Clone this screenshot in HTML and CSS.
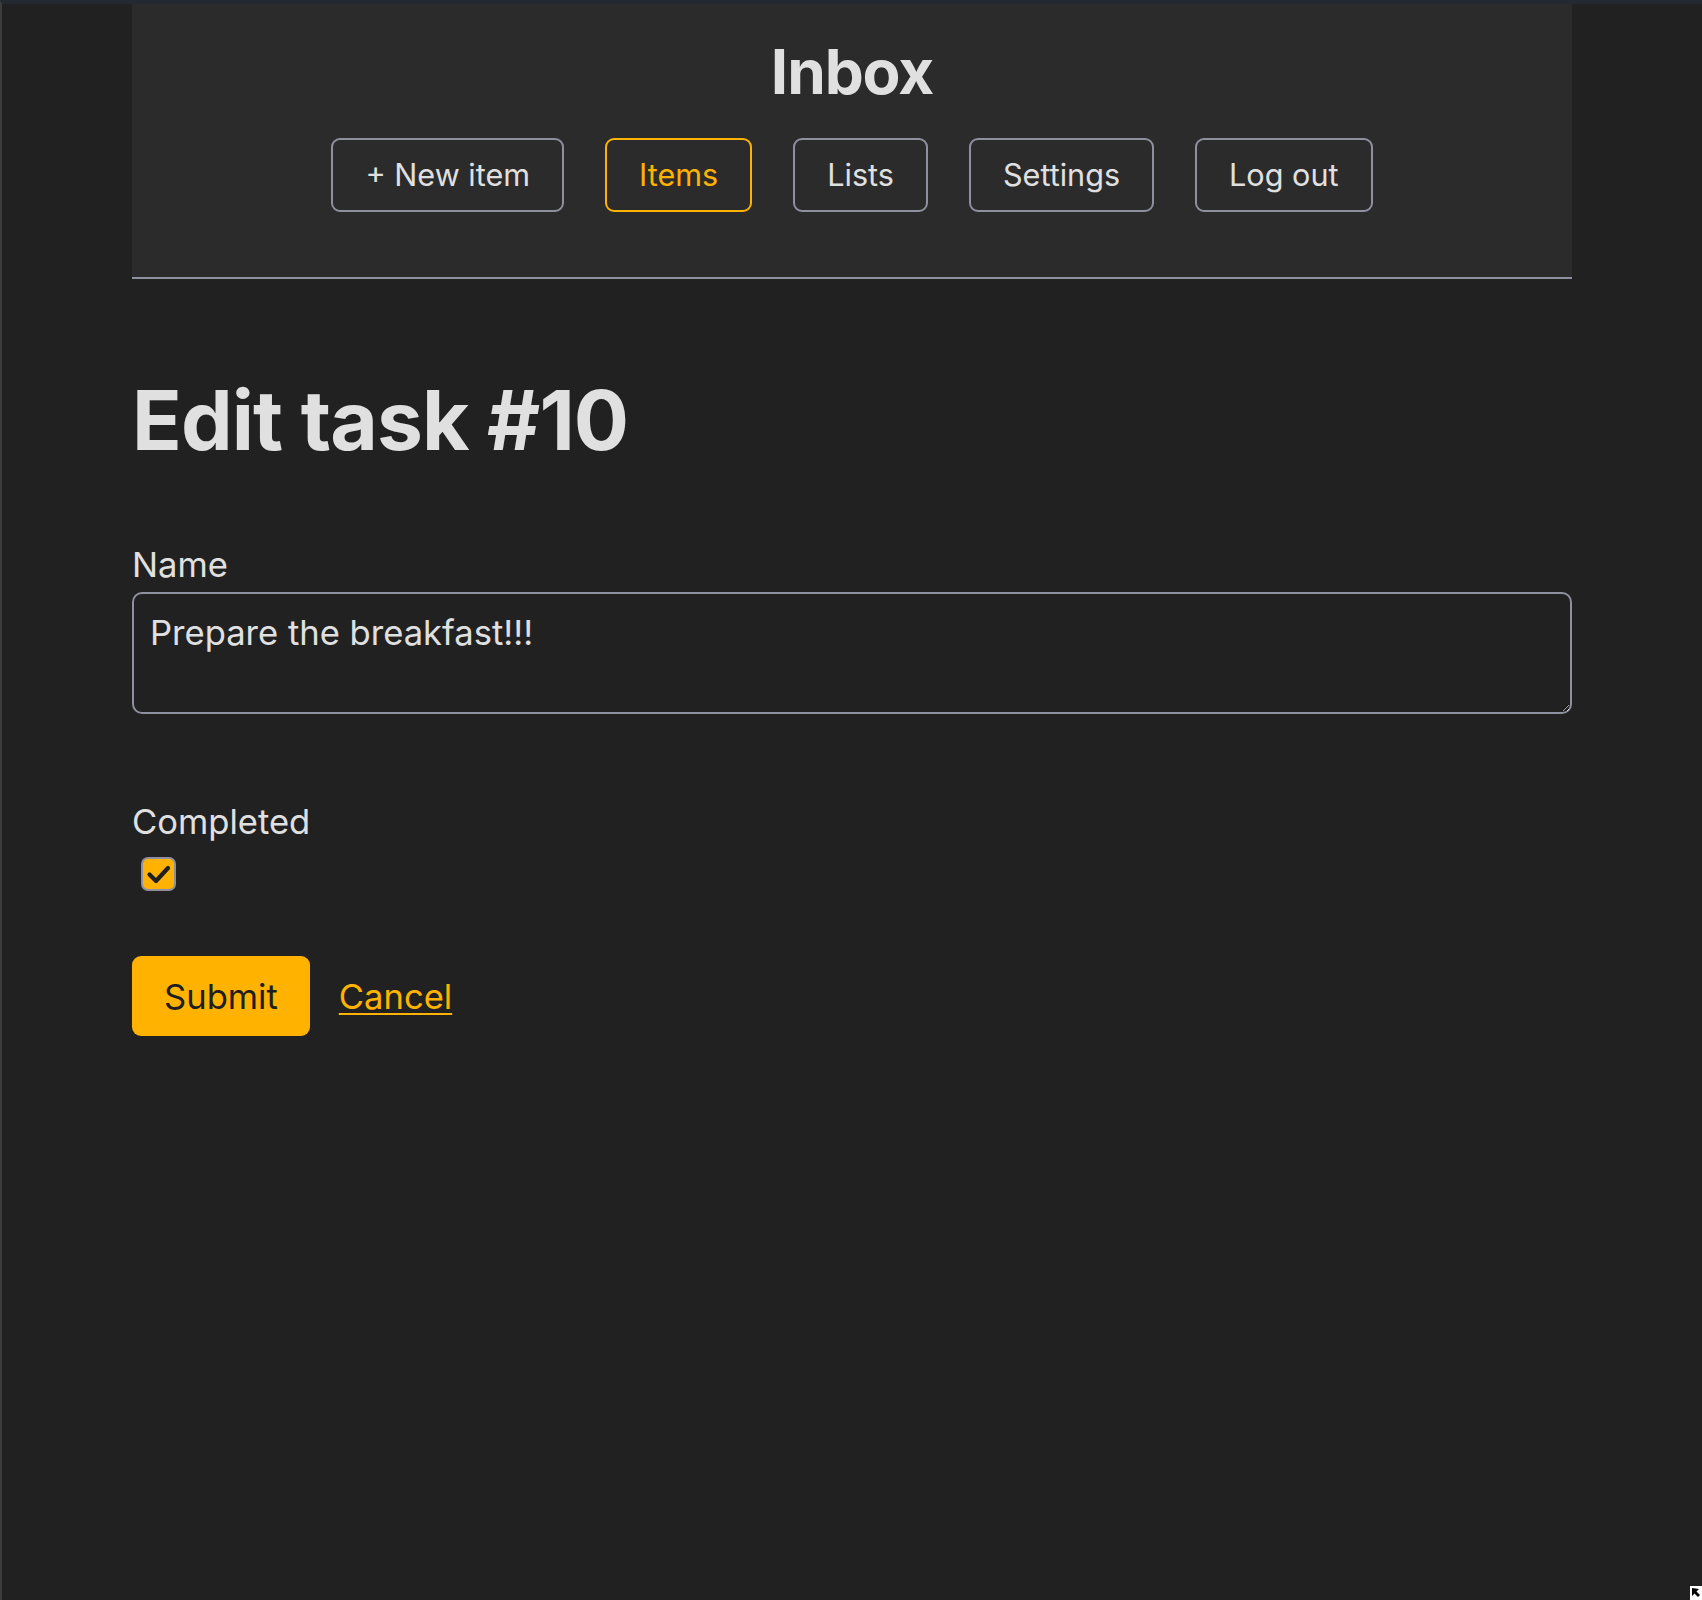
FILE: index.html
```html
<!DOCTYPE html>
<html lang="en">
<head>
<meta charset="utf-8">
<title>Edit task #10</title>
<link rel="stylesheet" href="styles.css">
</head>
<body>
<div class="frame">
  <div class="container">
    <header class="site-header">
      <h1 class="brand">Inbox</h1>
      <nav class="nav">
        <a class="nav-btn" href="#">+ New item</a>
        <a class="nav-btn active" href="#">Items</a>
        <a class="nav-btn" href="#">Lists</a>
        <a class="nav-btn" href="#">Settings</a>
        <a class="nav-btn" href="#">Log out</a>
      </nav>
    </header>
    <main class="content">
      <h1 class="page-title">Edit task #10</h1>
      <form class="form">
        <label class="field-label" for="name">Name</label>
        <textarea id="name" class="field-text">Prepare the breakfast!!!</textarea>
        <label class="field-label completed-label">Completed</label>
        <span class="check" role="checkbox" aria-checked="true">
          <svg width="34" height="34" viewBox="0 0 34 34"><path d="M8.5 17.5 L15 24 L27 11" fill="none" stroke="#1f1f1f" stroke-width="4.2" stroke-linecap="round" stroke-linejoin="round"/></svg>
        </span>
        <div class="actions">
          <button type="button" class="submit">Submit</button>
          <a class="cancel" href="#">Cancel</a>
        </div>
      </form>
    </main>
  </div>
  <div class="cursor">
    <svg width="12" height="14" viewBox="0 0 12 14"><rect width="12" height="14" fill="#ffffff"/><path d="M2 2 L2 10 L4.5 7.5 L8 11 L10 9 L6.5 5.5 L9 3 Z" fill="#000"/></svg>
  </div>
</div>
</body>
</html>
```
FILE: styles.css
```css
html, body {
  margin: 0;
  padding: 0;
  background: #212121;
}
body {
  font-family: "Inter", "Liberation Sans", sans-serif;
  color: #e0e0e0;
}
.frame {
  position: relative;
  box-sizing: border-box;
  min-height: 1600px;
  border-left: 2px solid #3c3c3c;
  border-top: 4px solid #232931;
}
.container {
  width: 1440px;
  margin: 0 auto;
}
.site-header {
  background: #2b2b2b;
  padding: 31px 0 65px;
  border-bottom: 2px solid #8e90a0;
  text-align: center;
}
.brand {
  margin: 0;
  font-size: 62px;
  line-height: 74px;
  font-weight: 700;
  letter-spacing: -0.018em;
  color: #e0e0e0;
}
.nav {
  display: flex;
  justify-content: center;
  gap: 41px;
  margin-top: 29px;
}
.nav-btn {
  display: inline-block;
  border: 2px solid #8e90a0;
  border-radius: 9px;
  padding: 12px 32px;
  font-size: 30.6px;
  line-height: 46px;
  color: #e0e0e0;
  text-decoration: none;
}
.nav-btn.active {
  border-color: #ffb300;
  color: #ffb300;
}
.content {
  padding-top: 93px;
}
.page-title {
  margin: 0;
  font-size: 82px;
  line-height: 98px;
  font-weight: 700;
  letter-spacing: -0.011em;
  color: #e0e0e0;
}
.form {
  display: flex;
  flex-direction: column;
  align-items: flex-start;
  margin-top: 69px;
}
.field-label {
  display: block;
  font-size: 34.6px;
  line-height: 51px;
  color: #e0e0e0;
}
.field-text {
  color-scheme: dark;
  box-sizing: border-box;
  width: 1440px;
  height: 122px;
  margin-top: 2px;
  padding: 13px 16px;
  background: #212121;
  border: 2px solid #8e90a0;
  border-radius: 10px;
  font-family: "Inter", "Liberation Sans", sans-serif;
  font-size: 34.6px;
  line-height: 51px;
  color: #e0e0e0;
  resize: vertical;
  outline: none;
}
.completed-label {
  margin-top: 82px;
}
.check {
  box-sizing: border-box;
  display: block;
  width: 35px;
  height: 34px;
  margin: 10px 0 0 9px;
  background: #ffb300;
  border: 2px solid #8e90a0;
  border-radius: 7px;
  position: relative;
}
.check svg {
  position: absolute;
  left: -2px;
  top: -2px;
}
.actions {
  display: flex;
  align-items: center;
  gap: 29px;
  margin-top: 65px;
}
.submit {
  height: 80px;
  padding: 0 32px;
  border: none;
  border-radius: 9px;
  background: #ffb300;
  color: #1e1e1e;
  font-family: "Inter", "Liberation Sans", sans-serif;
  font-size: 34.6px;
  line-height: 80px;
}
.cancel {
  font-size: 34.6px;
  line-height: 51px;
  color: #ffb300;
  text-decoration: underline;
  text-underline-offset: 4px;
  text-decoration-thickness: 2px;
}
.cursor {
  position: absolute;
  right: 0;
  bottom: 0;
  width: 12px;
  height: 14px;
  line-height: 0;
}
```
